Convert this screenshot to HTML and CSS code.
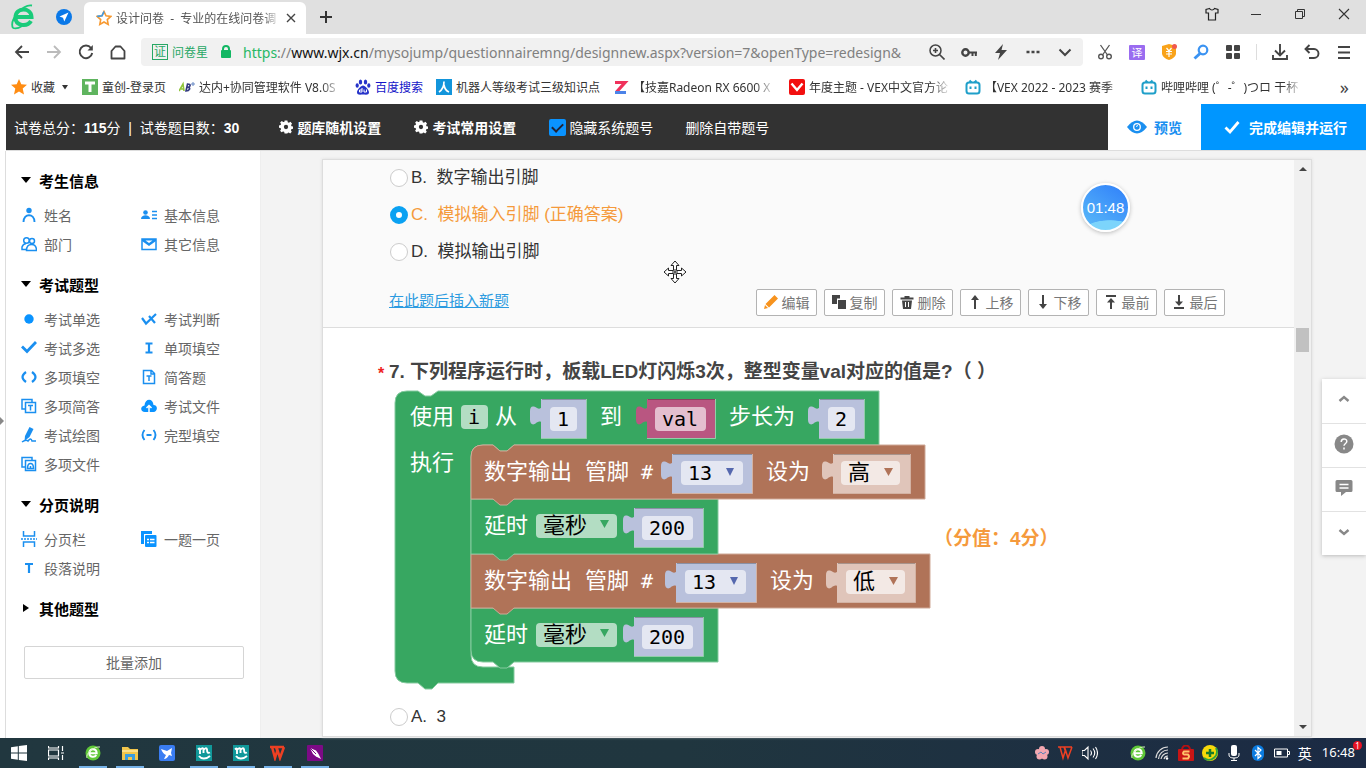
FILE: index.html
```html
<!DOCTYPE html>
<html lang="zh-CN">
<head>
<meta charset="utf-8">
<title>设计问卷 - 专业的在线问卷调查</title>
<link rel="stylesheet" href="styles.css">
</head>
<body>
<svg class="defs" aria-hidden="true">
  <defs>
    <g id="bili"><path d="M4.500 1.500l2 2M11.500 1.500l-2 2" /><rect x="1.500" y="3.500" width="13" height="11" rx="2.500"/><path d="M5.500 7.500v2.500M10.500 7.500v2.500"/></g>
    <path id="gear" d="M5 0h3l.4 2 1.200.5L11.300 1.400l1.700 2-1.100 1.500.5 1.200 1.600.4v2.400l-1.800.5-.5 1.200 1 1.600-1.700 1.700-1.600-1-1.200.5L8 14H5l-.5-1.800-1.200-.5-1.600 1L.2 11l1-1.600L.7 8.200-1 7.800V5.400l1.700-.5.5-1.200-1-1.500L2 .7l1.500 1L4.700 1.600z"/>
    <g id="e-ball"><circle cx="8" cy="8" r="7.500" fill="#5fc738"/><path d="M4.500 8.300h7.200C11.500 3 4.300 3 4.300 8.200c0 4.300 5.400 4.600 7 1.800" fill="none" stroke="#fff" stroke-width="2"/><path d="M2 13C0 9 9 1 15 2" fill="none" stroke="#d8f5bf"/></g>
    <g id="m-logo"><rect width="16" height="16" fill="#11989a"/><path d="M2 4.500q2-2 2 0v4.500M4 5q3-3.500 3.500-.5V8M7.500 5q3-3.500 3.500-.5 0 4.500 3 3M3 11c2 3 7 3.500 11 0" fill="none" stroke="#fff" stroke-width="1.900"/></g>
    <path id="w-logo" d="M0 2h14M2 2l3 11 2.500-8 2.500 8L14 2M6 2l2 6" />
  </defs>
</svg>

<header class="browser">
  <div class="titlebar">
    <svg class="brand" viewBox="0 0 24 26"><path d="M5 13h15.500C20 3 4.500 3 4.500 13.500 4.500 22.500 16.500 23 20 17" fill="none" stroke="#1acb7a" stroke-width="4"/><path d="M2 24C-2 16 12 0 21 1.500M2 24c3 1 6 0 9-2" fill="none" stroke="#1acb7a" stroke-width="1.800"/></svg>
    <svg class="plane" viewBox="0 0 16 16"><circle cx="8" cy="8" r="8" fill="#0a78e8"/><path d="M12.500 3.500L3.500 7.500l3.500 1.300 1.300 3.700z" fill="#fff"/></svg>
    <div class="tab">
      <svg class="i16" viewBox="0 0 16 16"><path d="M8 1.500l2 4.300 4.800.6-3.500 3.200.9 4.800L8 12l-4.200 2.400.9-4.800L1.200 6.400 6 5.800z" fill="#fff" stroke="#f79a32" stroke-width="1.600"/><path d="M1.200 6.400L6 5.800l2-4.300" fill="none" stroke="#3d9be9" stroke-width="1.600"/></svg>
      <span class="tab-title">设计问卷&nbsp; - &nbsp;专业的在线问卷调</span>
      <button class="plain" aria-label="关闭标签"><svg class="i10" viewBox="0 0 10 10"><path d="M1 1l8 8M9 1L1 9" fill="none" stroke="#444" stroke-width="1.400"/></svg></button>
    </div>
    <button class="plain newtab" aria-label="新标签"><svg class="i14" viewBox="0 0 14 14"><path d="M7 1v12M1 7h12" stroke="#333" stroke-width="2"/></svg></button>
    <div class="winctl">
      <button class="plain" aria-label="皮肤"><svg class="i14" viewBox="0 0 14 14"><path d="M4.500 1.500L1 2.500v3.500h2.500v7h7V6H13V2.500l-3.500-1c-1 2-4 2-5 0z" fill="none" stroke="#222" stroke-width="1.200"/></svg></button>
      <button class="plain" aria-label="最小化"><svg class="i14" viewBox="0 0 14 14"><path d="M2 7.500h10" stroke="#333"/></svg></button>
      <button class="plain" aria-label="还原"><svg class="i14" viewBox="0 0 14 14"><path d="M2.500 4.500h7v7h-7zM4.500 4.500v-2h7v7h-2" fill="none" stroke="#333"/></svg></button>
      <button class="plain" aria-label="关闭"><svg class="i14" viewBox="0 0 14 14"><path d="M2 2l10 10M12 2L2 12" stroke="#333" stroke-width="1.100"/></svg></button>
    </div>
  </div>

  <div class="address">
    <div class="nav">
      <button class="plain" aria-label="后退"><svg class="i16" viewBox="0 0 16 16"><path d="M15 8H2M8 2L2 8l6 6" fill="none" stroke="#444" stroke-width="1.800"/></svg></button>
      <button class="plain" aria-label="前进"><svg class="i16" viewBox="0 0 16 16"><path d="M1 8h13M8 2l6 6-6 6" fill="none" stroke="#bbb" stroke-width="1.800"/></svg></button>
      <button class="plain" aria-label="刷新"><svg class="i16" viewBox="0 0 16 16"><path d="M13 4a6.300 6.300 0 1 0 1.200 5" fill="none" stroke="#444" stroke-width="1.900"/><path d="M14.800 1v5.500H9.500z" fill="#444"/></svg></button>
      <button class="plain" aria-label="主页"><svg class="i16" viewBox="0 0 16 16"><path d="M1.500 7l4-4.500h5l4 4.500v7.500h-13z" fill="none" stroke="#444" stroke-width="1.800" stroke-linejoin="round"/></svg></button>
    </div>
    <div class="urlbox">
      <span class="cert">证</span><span class="site">问卷星</span>
      <svg class="lock" viewBox="0 0 12 14"><path d="M3 6V4a3 3 0 0 1 6 0v2" fill="none" stroke="#12b763" stroke-width="2"/><rect x="1" y="5" width="10" height="8" rx="1" fill="#12b763"/></svg>
      <div class="url" role="textbox" aria-label="网址" contenteditable="true"><span class="scheme">https</span>://<span class="host">www.wjx.cn</span>/mysojump/questionnairemng/designnew.aspx?version=7&amp;openType=redesign&amp;</div>
      <div class="urltools">
        <button class="plain" aria-label="缩放"><svg class="i16" viewBox="0 0 16 16"><circle cx="6.500" cy="6.500" r="5.500" fill="none" stroke="#444" stroke-width="1.500"/><path d="M4 6.500h5M6.500 4v5M10.500 10.500l5 5" stroke="#444" stroke-width="1.600"/></svg></button>
        <button class="plain" aria-label="密码"><svg class="i16" viewBox="0 0 16 16"><circle cx="4.500" cy="8.500" r="3.200" fill="none" stroke="#444" stroke-width="2.400"/><path d="M8 8.500h8M11.500 8v4M14.800 8v4" stroke="#444" stroke-width="2"/></svg></button>
        <button class="plain" aria-label="极速"><svg class="i16" viewBox="0 0 16 16"><path d="M10 0L2 9h5l-2 7 9-10H8.500z" fill="#444"/></svg></button>
        <button class="plain" aria-label="更多"><svg class="i16" viewBox="0 0 16 16"><path d="M1.500 8h3M6.500 8h3M11.500 8h3" stroke="#444" stroke-width="2.600"/></svg></button>
        <button class="plain" aria-label="展开"><svg class="i16" viewBox="0 0 16 16"><path d="M2.500 5.500L8 11l5.500-5.500" fill="none" stroke="#444" stroke-width="2"/></svg></button>
      </div>
    </div>
    <div class="exts">
      <button class="plain" aria-label="截图"><svg class="i16" viewBox="0 0 16 16"><path d="M3.500 1l7 10M12.500 1l-7 10" stroke="#555" stroke-width="1.300"/><circle cx="4" cy="12.500" r="2.300" fill="none" stroke="#555" stroke-width="1.400"/><circle cx="12" cy="12.500" r="2.300" fill="none" stroke="#555" stroke-width="1.400"/></svg></button>
      <button class="plain trans" aria-label="翻译">译</button>
      <button class="plain" aria-label="优惠"><svg class="i16" viewBox="0 0 16 16"><path d="M8 0l7 2v8q-1 4-7 6-6-2-7-6V2z" fill="#f9a31a"/><path d="M5.500 4L8 7l2.500-3M5 7.500h6M5 10h6M8 7v6" fill="none" stroke="#fff" stroke-width="1.200"/><circle cx="13.500" cy="2.500" r="2.500" fill="#f0584f"/></svg></button>
      <button class="plain" aria-label="搜索"><svg class="i16" viewBox="0 0 16 16"><circle cx="10" cy="6" r="4.300" fill="none" stroke="#3b93f2" stroke-width="2.200"/><path d="M7 9.500L1.500 14.500" stroke="#3b93f2" stroke-width="3"/></svg></button>
      <button class="plain" aria-label="应用"><svg class="i16" viewBox="0 0 16 16"><rect x="1" y="1" width="6" height="6" rx="1" fill="#444"/><rect x="9" y="1" width="6" height="6" rx="1" fill="#444"/><rect x="1" y="9" width="6" height="6" rx="1" fill="#444"/><rect x="9" y="9" width="6" height="6" rx="1" fill="#444"/></svg></button>
      <span class="vsep"></span>
      <button class="plain" aria-label="下载"><svg class="i16" viewBox="0 0 16 16"><path d="M8 0v11M3 6.500l5 5 5-5M1 11v4h14v-4" fill="none" stroke="#444" stroke-width="1.900"/></svg></button>
      <button class="plain" aria-label="撤销"><svg class="i16" viewBox="0 0 16 16"><path d="M1 5h9a4.300 4.300 0 0 1 0 9H5M5.500 1L1.500 5l4 4" fill="none" stroke="#444" stroke-width="1.900"/></svg></button>
      <button class="plain" aria-label="菜单"><svg class="i16" viewBox="0 0 16 16"><path d="M2 3h12M2 8.500h12M2 14h12" stroke="#444" stroke-width="2"/></svg></button>
    </div>
  </div>

  <nav class="bookmarks">
    <a href="#" class="bm fav"><svg class="i16" viewBox="0 0 16 16"><path d="M8 0l2.300 5.300 5.700.5-4.300 3.800 1.300 5.900L8 12.400l-5 3.100 1.300-5.900L0 5.800l5.700-.5z" fill="#ff8c12"/></svg><span>收藏</span><svg class="i8" viewBox="0 0 8 8"><path d="M1 2h6L4 6.500z" fill="#333"/></svg></a>
    <a href="#" class="bm"><svg class="i16" viewBox="0 0 16 16"><rect width="16" height="16" fill="#5fb45e"/><path d="M3 4h10M8 4v9" stroke="#fff" stroke-width="3"/></svg><span>童创-登录页</span></a>
    <a href="#" class="bm cut"><svg class="i16" viewBox="0 0 16 16"><path d="M0 12l4-7 1 7M2 10h3" fill="none" stroke="#8fc43a" stroke-width="1.600"/><path d="M7 12l1.500-7c4 0 3 3 0 3.200 4 .3 2 3.800-1.500 3.800z" fill="none" stroke="#333a80" stroke-width="1.600"/><path d="M12 5h4M14 3v4" stroke="#6788c4"/></svg><span>达内+协同管理软件 V8.0S</span></a>
    <a href="#" class="bm blue"><svg class="i16" viewBox="0 0 16 16"><g fill="#2633c9"><ellipse cx="5.500" cy="3" rx="1.700" ry="2.500"/><ellipse cx="10.500" cy="3" rx="1.700" ry="2.500"/><ellipse cx="2.200" cy="6.500" rx="1.600" ry="2.200"/><ellipse cx="13.800" cy="6.500" rx="1.600" ry="2.200"/><path d="M8 6.500c2 0 6 4 6 7s-4 2-6 2-6 1-6-2 4-7 6-7z"/></g><path d="M7 9v4H4.500v-2H7M9 10.500V13h2.500v-2.500" fill="none" stroke="#fff"/></svg><span>百度搜索</span></a>
    <a href="#" class="bm"><svg class="i16" viewBox="0 0 16 16"><rect width="16" height="16" fill="#1295db"/><path d="M8 2.500C8 8 6 11 3 13M8 6c.5 3 2.500 6 5 7" fill="none" stroke="#fff" stroke-width="1.700"/></svg><span>机器人等级考试三级知识点</span></a>
    <a href="#" class="bm cut"><svg class="i16" viewBox="0 0 16 16"><path d="M2 3.500h10L3.500 13" fill="none" stroke="#f0325c" stroke-width="3.200"/><path d="M2 13.500h11" stroke="#4b83e8" stroke-width="3"/></svg><span>【技嘉Radeon RX 6600 X</span></a>
    <a href="#" class="bm cut"><svg class="i16" viewBox="0 0 16 16"><rect width="16" height="16" rx="2" fill="#f20f0f"/><path d="M2.500 4.500L8 11l5.500-6.500" fill="none" stroke="#fff" stroke-width="2.400"/></svg><span>年度主题 - VEX中文官方论</span></a>
    <a href="#" class="bm cut"><svg class="i16 bili" viewBox="0 0 16 16"><use href="#bili"/></svg><span>【VEX 2022 - 2023 赛季</span></a>
    <a href="#" class="bm cut"><svg class="i16 bili" viewBox="0 0 16 16"><use href="#bili"/></svg><span>哔哩哔哩 (゜-゜)つロ 干杯</span></a>
    <button class="plain more" aria-label="更多书签">»</button>
  </nav>
</header>

<div class="app">
  <div class="topbar">
    <div class="stats">试卷总分：<b>115</b>分&nbsp; |&nbsp; 试卷题目数：<b>30</b></div>
    <button class="plain setting"><svg class="i14" viewBox="-1 0 15 14"><use href="#gear"/><circle cx="6.500" cy="7" r="2.300" fill="#323232"/></svg>题库随机设置</button>
    <button class="plain setting"><svg class="i14" viewBox="-1 0 15 14"><use href="#gear"/><circle cx="6.500" cy="7" r="2.300" fill="#323232"/></svg>考试常用设置</button>
    <label class="hide"><input type="checkbox" checked>隐藏系统题号</label>
    <button class="plain del">删除自带题号</button>
    <div class="actions">
      <button class="plain preview"><svg class="eye" viewBox="0 0 20 14"><path d="M0 7q10-13 20 0-10 13-20 0z" fill="#1a8ff0"/><circle cx="10" cy="7" r="3.300" fill="none" stroke="#fff" stroke-width="1.300"/><path d="M9 6.500l2-1" stroke="#fff"/></svg>预览</button>
      <button class="plain finish"><svg class="i16" viewBox="0 0 16 16"><path d="M1.500 8.500l4.500 4.500L14.500 3" fill="none" stroke="#fff" stroke-width="2.800"/></svg>完成编辑并运行</button>
    </div>
  </div>

  <div class="workspace">
    <aside class="sidebar">
      <h3 class="open">考生信息</h3>
      <div class="types">
        <button class="plain"><svg class="i16" viewBox="0 0 16 16"><circle cx="8" cy="3.500" r="2.700" fill="#1a8ff0"/><path d="M2.500 15c0-9 11-9 11 0" class="ln mid"/></svg>姓名</button>
        <button class="plain"><svg class="i16" viewBox="0 0 16 16"><circle cx="4.500" cy="5.500" r="2.300" fill="#1a8ff0"/><path d="M0 12c0-5 9-5 9 0z" fill="#1a8ff0"/><path d="M11 4.500h5M11 8h5M11 11.500h5" class="ln"/></svg>基本信息</button>
        <button class="plain"><svg class="i16" viewBox="0 0 16 16"><circle cx="5.500" cy="4.500" r="2.800" class="ln"/><circle cx="11" cy="5" r="2.500" class="ln"/><path d="M5 13.500H1V11q1-3 4-3.500M5.500 14.500q0-6 5-6t5 6z" class="ln"/></svg>部门</button>
        <button class="plain"><svg class="i16" viewBox="0 0 16 16"><rect x="1" y="3" width="14" height="10.500" class="ln"/><path d="M1 3h14v2L8 10 1 5z" fill="#1a8ff0"/><path d="M4.500 4.500h7L8 7z" fill="#fff"/></svg>其它信息</button>
      </div>
      <h3 class="open">考试题型</h3>
      <div class="types">
        <button class="plain"><svg class="i16" viewBox="0 0 16 16"><circle cx="8" cy="8" r="4.700" fill="#0a93ff"/></svg>考试单选</button>
        <button class="plain"><svg class="i16" viewBox="0 0 16 16"><path d="M1 7l4 5.500L15 3M8 5l6 7" class="ln thick"/></svg>考试判断</button>
        <button class="plain"><svg class="i16" viewBox="0 0 16 16"><path d="M1 6.500l5 5L15 2" class="ln heavy"/></svg>考试多选</button>
        <button class="plain"><svg class="i16" viewBox="0 0 16 16"><path d="M4.500 3.500h7M4.500 12.500h7M8 3.500v9" class="ln thick"/></svg>单项填空</button>
        <button class="plain"><svg class="i16" viewBox="0 0 16 16"><path d="M5 3Q-2 8 5 13M11 3q7 5 0 10" class="ln thick"/></svg>多项填空</button>
        <button class="plain"><svg class="i16" viewBox="0 0 16 16"><path d="M2.500 1.500h8l3 3v10h-11zM10 2v3h3M5.500 7h5M8 7v5" class="ln"/></svg>简答题</button>
        <button class="plain"><svg class="i16" viewBox="0 0 16 16"><path d="M4 11H1V1.500h10V4M4.500 4.500h10v10h-10zM7 7.500h5M9.500 7.500v5" class="ln"/></svg>多项简答</button>
        <button class="plain"><svg class="i16" viewBox="0 0 16 16"><path d="M4 14C-1 14-1 8 3.500 7.500 4 0 12 0 12.500 7c5 0 4 7 0 7z" fill="#0a93ff"/><path d="M8 14V8M5.500 10L8 7.500l2.500 2.500" fill="none" stroke="#fff" stroke-width="1.500"/></svg>考试文件</button>
        <button class="plain"><svg class="i16" viewBox="0 0 16 16"><path d="M8.500 0l4 2-4 8-5 4 .5-5z" fill="#1a8ff0"/><path d="M1 15q4-3 6-1 3-4 4 0h4" class="ln"/></svg>考试绘图</button>
        <button class="plain"><svg class="i16" viewBox="0 0 16 16"><path d="M3.500 3Q-.5 8 3.500 13M12.500 3q4 5 0 10M5.500 8h5" class="ln mid"/></svg>完型填空</button>
        <button class="plain"><svg class="i16" viewBox="0 0 16 16"><path d="M4 11H1V1.500h10V4M4.500 4.500h10v10h-10zM6.500 12.500q0-5 3-5t3 5zM9.500 13v-3" class="ln"/></svg>多项文件</button>
      </div>
      <h3 class="open">分页说明</h3>
      <div class="types">
        <button class="plain"><svg class="i16" viewBox="0 0 16 16"><path d="M2.500 0v5h11V0M2.500 16v-5h11v5" class="ln"/><path d="M0 8h16" class="ln" stroke-dasharray="2 1"/></svg>分页栏</button>
        <button class="plain"><svg class="i16" viewBox="0 0 16 16"><path d="M0 0h11v3H3v10H0z" fill="#0a93ff"/><rect x="4" y="4" width="11.500" height="12" rx="1" fill="#0a93ff"/><path d="M6 8.500h2M9 8.500h4.500M6 11.500h2M9 11.500h4.500" stroke="#fff" stroke-width="1.300"/></svg>一题一页</button>
        <button class="plain"><svg class="i16" viewBox="0 0 16 16"><path d="M4 4h8M8 4v9" class="ln thick"/></svg>段落说明</button>
      </div>
      <h3>其他题型</h3>
      <button class="batch">批量添加</button>
    </aside>
    <span class="collapse"></span>

    <main class="canvas">
      <div class="paper">
        <div class="questions">
          <section class="question current">
            <label class="option"><input type="radio" name="q6">B.&nbsp; 数字输出引脚</label>
            <label class="option right"><input type="radio" name="q6" checked>C.&nbsp; 模拟输入引脚 (正确答案)</label>
            <label class="option"><input type="radio" name="q6">D.&nbsp; 模拟输出引脚</label>
            <div class="tools">
              <a href="#">在此题后插入新题</a>
              <div class="btns">
                <button><svg class="i14" viewBox="0 0 14 14"><path d="M10.500 0L14 3.500 5 12.500 1.500 9zM1 10l3 3-4 1z" fill="#f7931e"/></svg>编辑</button>
                <button><svg class="i14" viewBox="0 0 14 14"><path d="M0 0h8v3.500H5V9H0zM6 5h8v9H6z" fill="#444"/></svg>复制</button>
                <button><svg class="i14" viewBox="0 0 14 14"><path d="M4.500 1h5v1.500h4v2H.5v-2h4zM2 5.500h10L11 14H3z" fill="#444"/><path d="M5.500 7v5M8.500 7v5" stroke="#fff"/></svg>删除</button>
                <button><svg class="i14" viewBox="0 0 14 14"><path d="M7 14V2" stroke="#444" stroke-width="2"/><path d="M7 0l4 5H3z" fill="#444"/></svg>上移</button>
                <button><svg class="i14" viewBox="0 0 14 14"><path d="M7 0v12" stroke="#444" stroke-width="2"/><path d="M7 14l4-5H3z" fill="#444"/></svg>下移</button>
                <button><svg class="i14" viewBox="0 0 14 14"><path d="M2 1h10M7 14V5" stroke="#444" stroke-width="2"/><path d="M7 3l4 4.500H3z" fill="#444"/></svg>最前</button>
                <button><svg class="i14" viewBox="0 0 14 14"><path d="M2 13h10M7 0v8" stroke="#444" stroke-width="2"/><path d="M7 11l4-4.500H3z" fill="#444"/></svg>最后</button>
              </div>
            </div>
            <time class="timer">01:48</time>
            <svg class="cursor" viewBox="0 0 24 24"><path d="M12 1l4 4.500h-2.500V10.500h5V8l4.500 4-4.500 4v-2.500h-5v5H16L12 23l-4-4.500h2.500v-5h-5V16L1 12l4.500-4v2.500h5v-5H8z" fill="#fff" stroke="#222"/><path d="M12 9v6M9 12h6" stroke="#222"/></svg>
          </section>

          <section class="question">
            <h2><i>*</i>7. 下列程序运行时，板载LED灯闪烁3次，整型变量val对应的值是?（ ）</h2>
            <div class="figure">
              <svg class="blocks" viewBox="394 389 540 302" role="img" aria-label="程序积木">
                <defs>
                  <path id="plug" d="M0 0v8c-2 2-3 2-5 1-5-3-7-1-7 3v9c0 4 3 6 6 3 3-2 5-2 6 0v15z"/>
                </defs>
                <path class="g" d="M395 403q0-12 12-12h11l7 5h6l7-5h441v54H514l-7 6h-7l-7-6H483q-12 0-12 12v198q0 12 12 12h31v16h-76l-6 6h-7l-7-6h-11q-12 0-12-12z"/>
                <path class="g" d="M471 608h247v54H514l-7 6h-7l-7-6h-10q-12 0-12-12z"/>
                <path class="b" d="M471 554h459v54H514l-7 6h-7l-7-6h-22z"/>
                <path class="g" d="M471 499h247v55H514l-7 6h-7l-7-6h-22z"/>
                <path class="b" d="M471 457q0-12 12-12h10l7 6h7l7-6h411v54H514l-7 6h-7l-7-6h-22z"/>
                <g class="v">
                  <use href="#plug" x="542" y="399"/><rect x="541" y="399" width="45" height="39"/>
                  <use href="#plug" x="820" y="399"/><rect x="819" y="399" width="45" height="39"/>
                  <use href="#plug" x="673" y="454"/><rect x="672" y="454" width="80" height="39"/>
                  <use href="#plug" x="635" y="508"/><rect x="634" y="508" width="69" height="39"/>
                  <use href="#plug" x="677" y="563"/><rect x="676" y="563" width="80" height="39"/>
                  <use href="#plug" x="635" y="617"/><rect x="634" y="617" width="69" height="39"/>
                </g>
                <g class="m"><use href="#plug" x="648" y="399"/><rect x="647" y="399" width="68" height="39"/></g>
                <g class="p">
                  <use href="#plug" x="834" y="454"/><rect x="833" y="454" width="77" height="39"/>
                  <use href="#plug" x="838" y="563"/><rect x="837" y="563" width="78" height="39"/>
                </g>
                <g class="hl">
                  <path d="M542 399.500h44M820 399.500h44M673 454.500h79M635 508.500h68M677 563.500h79M635 617.500h68M648 399.500h67M834 454.500h76M838 563.500h77"/>
                </g>
                <path class="edge" d="M541 438.500h45.500V399M647 438.500h68.500V399M819 438.500h45.500V399M672 493.500h80.500V454M833 493.500h77.500V454M634 547.500h69.500V508M676 602.500h80.500V563M837 602.500h78.500V563M634 656.500h69.500V617"/>
                <g class="f">
                  <rect x="461" y="405" width="27" height="24" rx="4"/><rect x="536" y="514" width="81" height="24" rx="4"/><rect x="536" y="623" width="81" height="24" rx="4"/>
                  <rect x="550" y="407" width="27" height="24" rx="4"/><rect x="655" y="407" width="51" height="24" rx="4"/><rect x="828" y="407" width="27" height="24" rx="4"/>
                  <rect x="681" y="461" width="62" height="24" rx="4"/><rect x="841" y="461" width="59" height="24" rx="4"/>
                  <rect x="642" y="516" width="51" height="24" rx="4"/>
                  <rect x="685" y="570" width="61" height="24" rx="4"/><rect x="846" y="570" width="59" height="24" rx="4"/>
                  <rect x="642" y="625" width="51" height="24" rx="4"/>
                </g>
                <g class="lbl">
                  <text x="410" y="424">使用</text><text x="495" y="424">从</text><text x="600" y="424">到</text><text x="729" y="424">步长为</text>
                  <text x="410" y="470">执行</text>
                  <text x="484" y="479">数字输出</text><text x="585" y="479">管脚</text><text class="mono" x="641" y="479">#</text><text x="766" y="479">设为</text>
                  <text x="484" y="533">延时</text>
                  <text x="484" y="588">数字输出</text><text x="585" y="588">管脚</text><text class="mono" x="641" y="588">#</text><text x="770" y="588">设为</text>
                  <text x="484" y="642">延时</text>
                </g>
                <g class="val">
                  <text x="468" y="424">i</text><text x="557" y="426">1</text><text x="662" y="426">val</text><text x="835" y="426">2</text>
                  <text x="688" y="480">13</text><text x="649" y="535">200</text><text x="692" y="589">13</text><text x="649" y="644">200</text>
                  <text class="han" x="543" y="533">毫秒</text><text class="han" x="543" y="642">毫秒</text><text class="han" x="848" y="480">高</text><text class="han" x="853" y="589">低</text>
                </g>
                <path class="dg" d="M600 520h9l-4.500 8zM600 629h9l-4.500 8z"/>
                <path class="dv" d="M726 468h8l-4 8zM730 577h8l-4 8z"/>
                <path class="db" d="M884 468h9l-4.500 8zM889 577h9l-4.500 8z"/>
              </svg>
              <strong class="score">（分值：4分）</strong>
            </div>
            <label class="option"><input type="radio" name="q7">A.&nbsp; 3</label>
          </section>
        </div>
        <div class="scroll"><span class="up"></span><span class="thumb"></span><span class="down"></span></div>
      </div>
    </main>

    <div class="dock">
      <button class="plain" aria-label="上一题"><svg class="i20" viewBox="0 0 20 20"><path d="M5.500 12L10 8l4.500 4" fill="none" stroke="#888" stroke-width="2.400"/></svg></button>
      <button class="plain" aria-label="帮助"><svg class="i20" viewBox="0 0 20 20"><circle cx="10" cy="10" r="9.500" fill="#888"/><path d="M7.200 8c0-4 5.600-4 5.600-.5 0 2-2.800 2-2.800 4.300M10 13.500v2" fill="none" stroke="#fff" stroke-width="1.500"/></svg></button>
      <button class="plain" aria-label="反馈"><svg class="i20" viewBox="0 0 20 20"><path d="M3 2h14q1.500 0 1.500 1.500v9q0 1.500-1.500 1.500h-5l-5 4v-4H3q-1.500 0-1.500-1.500v-9Q1.500 2 3 2z" fill="#888"/><path d="M5.500 6.500h9M5.500 10h9" stroke="#fff" stroke-width="1.500"/></svg></button>
      <button class="plain" aria-label="下一题"><svg class="i20" viewBox="0 0 20 20"><path d="M5.500 8l4.500 4 4.500-4" fill="none" stroke="#888" stroke-width="2.400"/></svg></button>
    </div>
  </div>
</div>

<footer class="taskbar">
  <div class="apps">
    <button class="plain" aria-label="开始"><svg class="i16" viewBox="0 0 16 16"><path d="M0 2.200l6.800-1v6.300H0zM7.800 1L16 0v7.500H7.800zM0 8.500h6.800v6.300L0 13.800zM7.800 8.500H16V16l-8.200-1z" fill="#fff"/></svg></button>
    <button class="plain" aria-label="任务视图"><svg class="i16" viewBox="0 0 16 16"><path d="M.5 1v2h10V1M.5 15v-2h10v2M.5 5h10v6H.5zM14.500 1v5M14.500 10v5M13 8h3" fill="none" stroke="#fff" stroke-width="1.200"/></svg></button>
    <button class="plain on" aria-label="浏览器"><svg class="i16" viewBox="0 0 16 16"><use href="#e-ball"/></svg></button>
    <button class="plain on" aria-label="文件"><svg class="i16" viewBox="0 0 16 16"><path d="M0 2h6l2 2h8v11H0z" fill="#f2c64c"/><path d="M0 5h16v2H0z" fill="#fbdf8a"/><path d="M3 15V9h10v6h-3v-3H6v3z" fill="#3a9de0"/></svg></button>
    <button class="plain" aria-label="飞鸟"><svg class="i16" viewBox="0 0 16 16"><rect width="16" height="16" rx="2" fill="#3a7df2"/><path d="M2 4l6 2 5-3-1 5 1 3-3-1q-2 4-5 4l2-4q-3-1-5-6z" fill="#fff"/></svg></button>
    <button class="plain on" aria-label="米思齐"><svg class="i16" viewBox="0 0 16 16"><use href="#m-logo"/></svg></button>
    <button class="plain on" aria-label="米思齐"><svg class="i16" viewBox="0 0 16 16"><use href="#m-logo"/></svg></button>
    <button class="plain on" aria-label="文档"><svg class="i16 wps" viewBox="0 0 16 16"><use href="#w-logo"/></svg></button>
    <button class="plain on" aria-label="画笔"><svg class="i16" viewBox="0 0 16 16"><rect width="16" height="16" rx="1" fill="#7c0a86"/><path d="M3 3l6 2.500 2.500 3.500 2.500 5-5-2.500L6 9z" fill="#fff"/><path d="M3 3l6 6" stroke="#7c0a86"/></svg></button>
  </div>
  <div class="tray">
    <svg class="i16" viewBox="0 0 16 16"><g fill="#f3a7b0"><circle cx="8" cy="4" r="3"/><circle cx="4" cy="7" r="3"/><circle cx="12" cy="7" r="3"/><circle cx="5.500" cy="11.500" r="3"/><circle cx="10.500" cy="11.500" r="3"/><circle cx="8" cy="8" r="3"/></g><path d="M4 9l3-2 2 2 3-2" fill="none" stroke="#5b83b8"/></svg>
    <svg class="i16 wps thin" viewBox="0 0 16 16"><use href="#w-logo"/></svg>
    <svg class="i16" viewBox="0 0 16 16"><path d="M0 5.500h2.500L6 2v12l-3.500-3.500H0zM8.500 5.500q2 2.500 0 5M11 3.500q3.500 4.500 0 9M13.500 2q4 6 0 12" fill="none" stroke="#fff" stroke-width="1.100"/></svg>
    <span class="gap"></span>
    <svg class="i16" viewBox="0 0 16 16"><use href="#e-ball"/></svg>
    <svg class="i16" viewBox="0 0 16 16"><path d="M2 13A12 12 0 0 1 14 2M4.500 14A9.500 9.500 0 0 1 14 5M7 14a7 7 0 0 1 7-6M10 14a4 4 0 0 1 4-3" fill="none" stroke="#ddd" stroke-width="1.200"/><circle cx="13" cy="13.500" r="1.200" fill="#fff"/></svg>
    <svg class="i16" viewBox="0 0 16 16"><path d="M4 5c0-6 8-6 8 0" fill="none" stroke="#b70f12" stroke-width="2"/><rect x="0" y="4" width="16" height="12" rx="1" fill="#c81515"/><path d="M11.500 6.500H6q-2 2 0 3h4q2 2 0 4H4.500" fill="none" stroke="#ffc46b" stroke-width="1.900"/></svg>
    <svg class="i16" viewBox="0 0 16 16"><circle cx="8" cy="8" r="8" fill="#f6d90a"/><path d="M2 13A8 8 0 0 0 14 3" fill="none" stroke="#30a33d" stroke-width="2"/><path d="M8 4v8M4 8h8" stroke="#177b2a" stroke-width="2.500"/></svg>
    <svg class="i16" viewBox="0 0 16 16"><rect x="5" y="0" width="6" height="11" rx="2" fill="#fff"/><path d="M3 8v2q0 3 5 3t5-3V8M8 13v2.500M5 15.500h6" fill="none" stroke="#fff"/></svg>
    <svg class="i16" viewBox="0 0 16 16"><rect x="2" y="0" width="12" height="16" rx="6" fill="#0a7be0"/><path d="M5 5l6 6-3 2.500v-11L11 5l-6 6" fill="none" stroke="#fff" stroke-width="1.200"/></svg>
    <svg class="i16" viewBox="0 0 16 16"><path d="M.5 4h13v8H.5zM14 6.500h1.500v3H14" fill="none" stroke="#fff"/><path d="M2.500 6h5v4h-5z" fill="#fff"/></svg>
    <span class="ime">英</span>
    <span class="clock">16:48<span class="badge">1</span></span>
  </div>
</footer>
</body>
</html>
```
FILE: styles.css
```css
* { box-sizing: border-box; }

body {
  margin: 0;
  height: 100vh;
  display: flex;
  flex-direction: column;
  overflow: hidden;
  background: #fff;
  color: #333;
  font: 14px "Liberation Sans", "Noto Sans CJK SC", sans-serif;
}

svg { flex: none; display: block; }
.defs { position: absolute; width: 0; height: 0; }
.i8 { width: 8px; height: 8px; }
.i10 { width: 10px; height: 10px; }
.i14 { width: 14px; height: 14px; }
.i16 { width: 16px; height: 16px; }
.i20 { width: 20px; height: 20px; }

button { font: inherit; color: inherit; cursor: pointer; }
.plain {
  border: 0;
  padding: 0;
  background: none;
  display: flex;
  align-items: center;
  justify-content: center;
}

/* Browser chrome */
.browser { flex: none; font-family: "Noto Sans", "Noto Sans CJK SC", sans-serif; }
.titlebar { height: 34px; background: #e0e0e0; display: flex; align-items: center; padding-left: 11px; }
.brand { width: 24px; height: 26px; }
.plane { width: 16px; height: 16px; margin: 0 12px 0 21px; }
.tab {
  align-self: flex-end;
  height: 32px;
  width: 222px;
  padding: 0 10px 0 12px;
  display: flex;
  align-items: center;
  gap: 4px;
  background: #fff;
  border-radius: 6px 6px 0 0;
  font-size: 12px;
}
.tab-title {
  flex: 1;
  min-width: 0;
  white-space: nowrap;
  color: #555;
  mask-image: linear-gradient(90deg, #000 88%, transparent);
}
.newtab { margin-left: 13px; }
.winctl { margin-left: auto; display: flex; gap: 30px; padding: 0 15px 6px 0; }

.address { height: 36px; display: flex; align-items: center; padding: 0 14px; }
.nav { display: flex; gap: 16px; width: 127px; }
.urlbox {
  flex: 1;
  min-width: 0;
  height: 28px;
  display: flex;
  align-items: center;
  padding: 0 10px 0 11px;
  background: #f1f1f1;
  border-radius: 4px;
}
.cert {
  width: 16px;
  height: 16px;
  border: 1px solid #27a765;
  color: #27a765;
  font-size: 12px;
  line-height: 14px;
  text-align: center;
}
.site { margin-left: 4px; color: #27a765; font-size: 12px; }
.lock { width: 12px; height: 14px; margin: 0 11px 0 12px; }
.url { flex: 1; min-width: 0; overflow: hidden; white-space: nowrap; font-size: 14px; color: #808080; }
.scheme { color: #27b866; }
.host { color: #111; }
.urltools { display: flex; gap: 16px; margin-left: 8px; }
.exts { display: flex; align-items: center; gap: 16px; padding-left: 14px; }
.trans { width: 16px; height: 15px; background: #9a6cf0; color: #fff; font-size: 11px; border-radius: 1px; }
.vsep { width: 1px; height: 16px; margin: 0 -1px; background: #ddd; }

.bookmarks { height: 34px; display: flex; align-items: center; gap: 13px; padding: 0 17px 0 11px; font-size: 12px; }
.bm { flex: none; display: flex; align-items: center; gap: 4px; color: #333; text-decoration: none; white-space: nowrap; }
.cut span { min-width: 143px; mask-image: linear-gradient(90deg, #000 122px, transparent 143px); }
.fav .i8 { margin-left: 2px; }
.blue { color: #1414c8; }
.bili { fill: none; stroke: #1f9fc9; stroke-width: 2; }
.more { margin-left: auto; font-size: 18px; color: #444; }

/* Editor header */
.app { flex: 1; min-height: 0; display: flex; flex-direction: column; padding-left: 6px; }
.topbar {
  flex: none;
  height: 46px;
  display: flex;
  align-items: center;
  padding-left: 8px;
  background: #323232;
  color: #fff;
  white-space: nowrap;
}
.setting { gap: 4px; margin-left: 40px; font-weight: bold; }
.setting + .setting { margin-left: 33px; }
.setting svg { fill: #fff; }
.hide { display: flex; align-items: center; gap: 3px; margin-left: 33px; }
.hide input {
  appearance: none;
  margin: 0;
  width: 17px;
  height: 17px;
  border-radius: 2px;
  background: #0a93ff;
  display: grid;
  place-items: center;
}
.hide input::after {
  content: "";
  width: 9px;
  height: 5px;
  border: solid #223;
  border-width: 0 0 2px 2px;
  transform: translateY(-1px) rotate(-45deg);
}
.del { margin-left: 32px; }
.actions { margin-left: auto; align-self: stretch; display: flex; font-weight: bold; }
.preview { width: 93px; gap: 7px; background: #fff; color: #1a8ff0; }
.eye { width: 20px; height: 14px; }
.finish { width: 165px; gap: 9px; padding-left: 4px; background: #0096ff; }

/* Workspace */
.workspace { flex: 1; min-height: 0; display: flex; position: relative; background: #f3f3f3; border-top: 1px solid #ddd; }
.sidebar { flex: none; width: 254px; padding: 15px 15px 0; background: #fff; color: #666; box-shadow: -1px 0 #ddd, 1px 0 #eee; }
.sidebar h3 {
  margin: 0;
  height: 28px;
  display: flex;
  align-items: center;
  gap: 8px;
  color: #000;
  font-size: 15px;
}
.sidebar h3::before { content: ""; margin: 0 2px; border: solid transparent; border-width: 4px 0 4px 6px; border-left-color: #000; }
.sidebar h3.open::before { margin: 0; border-width: 6px 5px 0; border-color: #000 transparent transparent; }
.types { display: grid; grid-template-columns: 120px 1fr; grid-auto-rows: 29px; margin: 6px 0 12px; }
.types button { justify-content: flex-start; gap: 7px; }
.ln { fill: none; stroke: #1a8ff0; stroke-width: 1.500; }
.mid { stroke-width: 1.900; }
.thick { stroke-width: 2.200; }
.heavy { stroke-width: 2.800; }
.batch { display: block; width: 220px; height: 33px; margin: 24px 0 0 3px; padding: 0 0 2px; border: 1px solid #d5d5d5; border-radius: 2px; background: #fff; }
.collapse { position: absolute; left: -6px; top: 266px; border: solid transparent; border-width: 4px 0 4px 4px; border-left-color: #888; }

.canvas { flex: 1; min-width: 0; display: flex; padding: 8px 54px 1px 62px; }
.paper { flex: 1; min-width: 0; display: flex; background: #fff; border: 1px solid #ddd; box-shadow: 0 0 3px #ddd; }
.questions { flex: 1; min-width: 0; overflow: hidden; }
.question { padding: 34px 66px 0; }
.current { position: relative; padding-top: 0; background: #fafafa; border-bottom: 1px solid #ddd; }
.option { display: flex; align-items: center; gap: 3px; height: 37px; padding: 0 0 1px 1px; font-size: 17px; line-height: 20px; color: #333; }
.right { color: #f59a3c; }
.option input {
  appearance: none;
  flex: none;
  width: 18px;
  height: 18px;
  margin: 0;
  border: 1px solid #ccc;
  border-radius: 50%;
  background: #fff;
}
.option input:checked { border: 6px solid #0aa1f2; }
.tools { display: flex; justify-content: space-between; align-items: flex-start; padding: 18px 3px 11px 0; }
.tools a { color: #2c9be0; font-size: 15px; }
.btns { display: flex; gap: 7px; }
.btns button {
  display: flex;
  align-items: center;
  justify-content: center;
  gap: 4px;
  width: 61px;
  height: 27px;
  padding: 0 0 2px;
  border: 1px solid #b3b3b3;
  border-radius: 2px;
  background: #fff;
  color: #777;
}
.timer {
  position: absolute;
  right: 164px;
  top: 23px;
  width: 49px;
  height: 49px;
  border: 2px solid #fff;
  border-radius: 50%;
  background: radial-gradient(ellipse 26px 10px at 60% 100%, #7cd4fb 94%, transparent), linear-gradient(35deg, #5cbcf8, #2f7ffa);
  box-shadow: 0 1px 4px #bbb;
  color: #fff;
  font-size: 15px;
  line-height: 45px;
  text-align: center;
}
.cursor { position: absolute; left: 340px; top: 100px; width: 24px; height: 24px; }

.question h2 { position: relative; margin: 0; font-size: 19px; line-height: 20px; color: #444; white-space: nowrap; }
.question h2 i { position: absolute; left: -11px; top: 2px; color: #e22; font-size: 16px; font-style: normal; }
.figure { display: flex; align-items: center; margin: 7px 0 8px 5px; }
.score { padding-bottom: 8px; color: #f59a3c; font-size: 19px; white-space: nowrap; }

/* Block program */
.blocks { width: 540px; height: 302px; }
.g { fill: #37a761; stroke: #85ca9f; }
.b { fill: #b07358; stroke: #cfa997; }
.v { fill: #b9c1dc; }
.m { fill: #b95681; }
.p { fill: #e0c5ba; }
.hl { stroke: #000; stroke-opacity: 0.250; }
.edge { fill: none; stroke: #fff; stroke-opacity: 0.450; }
.f { fill: #fff; fill-opacity: 0.620; }
.lbl { fill: #fff; font: 22px "Noto Sans CJK SC", sans-serif; }
.lbl .mono { font: 20px "DejaVu Sans Mono", monospace; }
.val { fill: #000; font: 20px "DejaVu Sans Mono", monospace; }
.val .han { font: 22px "Noto Sans CJK SC", sans-serif; }
.dg { fill: #37a761; }
.dv { fill: #5568ae; }
.db { fill: #b07358; }

.scroll { flex: none; width: 17px; display: flex; flex-direction: column; align-items: center; background: #f0f0f0; padding: 7px 0; }
.up { border: solid transparent; border-width: 0 4px 4px; border-bottom-color: #444; }
.thumb { width: 13px; height: 24px; margin-top: 157px; background: #c1c1c1; }
.down { margin-top: auto; border: solid transparent; border-width: 4px 4px 0; border-top-color: #444; }

.dock { position: absolute; right: 0; top: 228px; width: 44px; background: #fff; box-shadow: 0 1px 4px #bbb; }
.dock button { width: 44px; height: 44px; padding-bottom: 4px; }
.dock button + button { border-top: 1px solid #e2e2e2; }

/* Taskbar */
.taskbar {
  flex: none;
  height: 30px;
  display: flex;
  justify-content: space-between;
  background: linear-gradient(90deg, #21373f, #20363f 50%, #1b2a44);
  color: #fff;
}
.apps { display: flex; gap: 9px; padding-left: 5px; }
.apps button { width: 28px; height: 30px; padding-top: 2px; border-bottom: 2px solid transparent; }
.apps .on { border-bottom-color: #76b2e8; }
.wps { fill: none; stroke: #ee4023; stroke-width: 2.500; }
.thin { stroke-width: 1.500; }
.tray { display: flex; align-items: center; gap: 8px; padding-right: 5px; }
.gap { width: 16px; }
.ime { font-size: 14px; }
.clock { position: relative; padding: 0 6px 3px 2px; font: 13px "Noto Sans", sans-serif; }
.badge {
  position: absolute;
  right: -1px;
  top: -2px;
  width: 9px;
  height: 9px;
  border-radius: 50%;
  background: #e81123;
  font-size: 8px;
  line-height: 9px;
  text-align: center;
}
```
